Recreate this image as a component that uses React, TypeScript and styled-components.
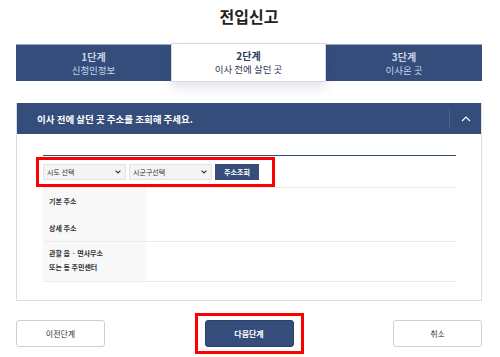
import React from "react";
import styled, { createGlobalStyle } from "styled-components";

const GlobalStyle = createGlobalStyle`
  body {
    margin: 0;
    background: #ffffff;
    font-family: "Noto Sans CJK KR", "Noto Sans", sans-serif;
    color: #222;
  }
`;

const steps = [
  { no: "1단계", label: "신청인정보" },
  { no: "2단계", label: "이사 전에 살던 곳" },
  { no: "3단계", label: "이사온 곳" },
];

const Chevron: React.FC = () => (
  <svg width="6" height="4" viewBox="0 0 6 4">
    <path d="M0.6 0.6 L3 3 L5.4 0.6" fill="none" stroke="#333" strokeWidth="1.1" />
  </svg>
);

const App: React.FC = () => {
  return (
    <>
      <GlobalStyle />
      <Page>
        <Title>전입신고</Title>
        <Steps>
          {steps.map((s, i) => (
            <Step key={s.no} active={i === 1}>
              <StepNo>{s.no}</StepNo>
              <StepLabel>{s.label}</StepLabel>
            </Step>
          ))}
        </Steps>

        <Panel>
          <PanelHeader>
            <PanelTitle>이사 전에 살던 곳 주소를 조회해 주세요.</PanelTitle>
            <Toggle>
              <svg width="10" height="6" viewBox="0 0 10 6">
                <path d="M1 5 L5 1 L9 5" fill="none" stroke="#fff" strokeWidth="1.1" />
              </svg>
            </Toggle>
          </PanelHeader>
          <PanelBody>
            <TopLine />
            <SearchBox>
              <SelectWrap>
                <Select defaultValue="">
                  <option value="">시도 선택</option>
                </Select>
                <Arrow>
                  <Chevron />
                </Arrow>
              </SelectWrap>
              <SelectWrap>
                <Select defaultValue="">
                  <option value="">시군구선택</option>
                </Select>
                <Arrow>
                  <Chevron />
                </Arrow>
              </SelectWrap>
              <SearchButton>주소조회</SearchButton>
            </SearchBox>
            <Table>
              <Row>
                <Label>
                  <LabelLine h={26}>기본 주소</LabelLine>
                  <LabelLine h={27}>상세 주소</LabelLine>
                </Label>
                <Value />
              </Row>
              <Row>
                <Label>
                  <LabelLine h={18} pad={3}>관할 읍 · 면사무소</LabelLine>
                  <LabelLine h={14} pad={0}>또는 동 주민센터</LabelLine>
                  <Spacer />
                </Label>
                <Value />
              </Row>
            </Table>
          </PanelBody>
        </Panel>

        <Footer>
          <OutlineButton>이전단계</OutlineButton>
          <Highlight>
            <PrimaryButton>다음단계</PrimaryButton>
          </Highlight>
          <OutlineButton>취소</OutlineButton>
        </Footer>
      </Page>
    </>
  );
};

export default App;

const Page = styled.div`
  width: 500px;
  height: 357px;
  padding: 0 18px 0 16px;
  box-sizing: border-box;
  overflow: hidden;
`;

const Title = styled.h1`
  margin: 0;
  padding-top: 4px;
  height: 39px;
  box-sizing: border-box;
  text-align: center;
  font-size: 16px;
  font-weight: 700;
  color: #222;
  line-height: 24px;
`;

const Steps = styled.div`
  display: grid;
  grid-template-columns: 155px 155px 1fr;
  height: 37px;
  margin-top: 5px;
`;

const Step = styled.div<{ active?: boolean }>`
  display: flex;
  flex-direction: column;
  align-items: center;
  justify-content: center;
  gap: 1px;
  box-sizing: border-box;
  background: ${(p) => (p.active ? "#ffffff" : "#344d7a")};
  color: ${(p) => (p.active ? "#2f3a55" : "#c9d3e6")};
  border: ${(p) => (p.active ? "1px solid #d5d9e4" : "none")};
  border-top: 1px solid ${(p) => (p.active ? "#d5d9e4" : "#9aa8c2")};
  margin: ${(p) => (p.active ? "-1px 0" : "0")};
  box-shadow: ${(p) => (p.active ? "0 6px 10px rgba(40, 50, 80, 0.12)" : "none")};
  position: relative;
  z-index: ${(p) => (p.active ? 1 : 0)};
`;

const StepNo = styled.div`
  font-size: 10px;
  font-weight: 700;
  line-height: 12px;
`;

const StepLabel = styled.div`
  font-size: 9.5px;
  line-height: 12px;
`;

const Panel = styled.div`
  margin-top: 22px;
  border: 1px solid #dddddd;
  border-top: none;
  height: 198px;
  box-sizing: border-box;
`;

const PanelHeader = styled.div`
  display: flex;
  align-items: center;
  height: 31px;
  background: #344d7a;
  padding-left: 20px;
`;

const PanelTitle = styled.div`
  flex: 1;
  color: #ffffff;
  font-size: 9.5px;
  font-weight: 700;
`;

const Toggle = styled.div`
  width: 31px;
  height: 20px;
  border-left: 1px solid #4d6390;
  display: flex;
  align-items: center;
  justify-content: center;
`;

const PanelBody = styled.div`
  padding: 21px 25px 0 26px;
`;

const TopLine = styled.div`
  height: 1px;
  background: #344d7a;
`;

const SearchBox = styled.div`
  display: flex;
  align-items: center;
  gap: 3px;
  margin: 1px 0 0 -7px;
  width: 225px;
  height: 24px;
  padding: 0 4px;
  border: 3px solid #ff0000;
  box-sizing: content-box;
`;

const SelectWrap = styled.div`
  position: relative;
  flex: none;
  width: 83px;
  height: 16px;
`;

const Select = styled.select`
  appearance: none;
  display: block;
  box-sizing: border-box;
  width: 83px;
  height: 16px;
  margin: 0;
  padding: 0 3px;
  border: 1px solid #e2e2e2;
  border-radius: 0;
  background: #f4f4f4;
  font-family: "Noto Sans CJK KR", sans-serif;
  font-size: 7px;
  line-height: 14px;
  color: #333;
  outline: none;
`;

const Arrow = styled.span`
  position: absolute;
  right: 5px;
  top: 6px;
  display: flex;
  pointer-events: none;
`;

const SearchButton = styled.button`
  flex: none;
  width: 44px;
  height: 16px;
  border: none;
  background: #344d7a;
  color: #ffffff;
  font-family: "Noto Sans CJK KR", sans-serif;
  font-size: 7px;
  font-weight: 700;
  padding: 0;
`;

const Table = styled.div`
  border-bottom: 1px solid #ececec;
`;

const Row = styled.div`
  display: grid;
  grid-template-columns: 103px 1fr;
  border-top: 1px solid #ececec;
`;

const Label = styled.div`
  background: #f8f8f8;
  display: flex;
  flex-direction: column;
  padding: 0 6px;
  font-size: 7px;
  font-weight: 700;
  color: #333;
`;

const LabelLine = styled.span<{ h: number; pad?: number }>`
  height: ${(p) => p.h}px;
  padding-top: ${(p) => p.pad || 0}px;
  box-sizing: border-box;
  display: flex;
  align-items: center;
  line-height: 10px;
`;

const Spacer = styled.div`
  height: 7px;
`;

const Value = styled.div``;

const Footer = styled.div`
  display: flex;
  align-items: center;
  justify-content: space-between;
  margin-top: 12px;
`;

const buttonBase = `
  width: 89px;
  height: 27px;
  border-radius: 3px;
  font-family: "Noto Sans CJK KR", sans-serif;
  font-size: 8px;
  cursor: pointer;
`;

const OutlineButton = styled.button`
  ${buttonBase}
  background: #ffffff;
  border: 1px solid #cfcfcf;
  color: #333;
`;

const Highlight = styled.div`
  border: 3px solid #ff0000;
  padding: 4px 7px;
  display: flex;
`;

const PrimaryButton = styled.button`
  ${buttonBase}
  background: #344d7a;
  border: 1px solid #2b4068;
  color: #ffffff;
  font-weight: 700;
`;
